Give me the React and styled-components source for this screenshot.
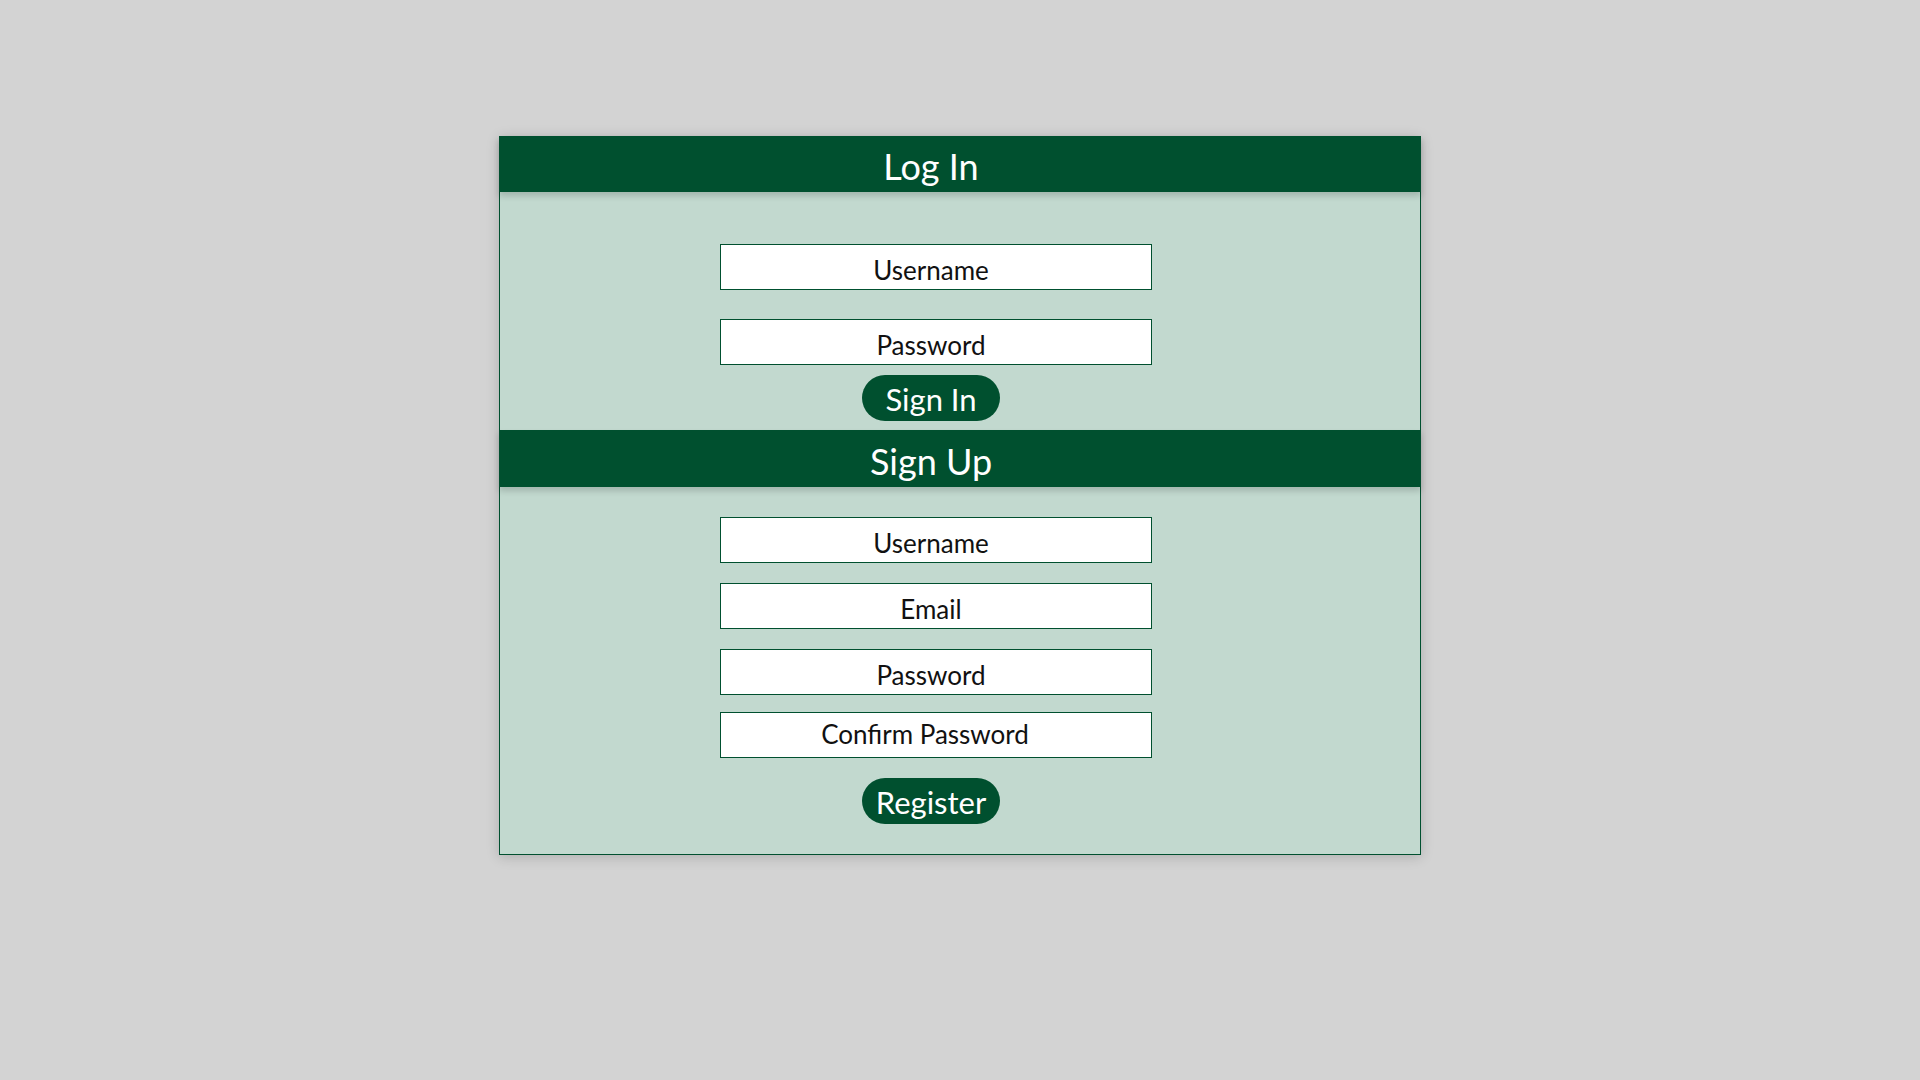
import React from "react";
import styled, { createGlobalStyle } from "styled-components";

const green = "#00502f";
const mint = "#c2d9cf";

const GlobalStyle = createGlobalStyle`
  html, body {
    margin: 0;
    padding: 0;
    background: #d3d3d3;
    font-family: Lato, "Open Sans", sans-serif;
  }
`;

const Page = styled.div`
  min-height: 1080px;
  padding-top: 136px;
  box-sizing: border-box;
`;

const Card = styled.div`
  width: 922px;
  margin: 0 auto;
  display: flex;
  flex-direction: column;
  box-shadow: 0 2px 12px rgba(0, 0, 0, 0.18);
`;

const Header = styled.div`
  height: ${(p) => p.$height}px;
  box-sizing: border-box;
  background: ${green};
  color: #fff;
  display: flex;
  align-items: center;
  justify-content: center;
  padding: 4px 58px 0 0;
  font-size: 36px;
  box-shadow: 0 4px 6px rgba(0, 0, 0, 0.16);
  position: relative;
  z-index: 1;
`;

const Body = styled.div`
  background: ${mint};
  border-left: 1px solid ${green};
  border-right: 1px solid ${green};
  border-bottom: ${(p) => (p.$last ? `1px solid ${green}` : "none")};
  display: flex;
  flex-direction: column;
  align-items: center;
  padding: ${(p) => p.$top}px 48px ${(p) => p.$bottom}px 0;
`;

const Field = styled.input`
  width: 432px;
  height: 46px;
  box-sizing: border-box;
  margin-top: ${(p) => p.$gap || 0}px;
  border: 1px solid ${green};
  background: #fff;
  font-family: inherit;
  font-size: 26px;
  text-align: center;
  padding: ${(p) => (p.$high ? "0 22px 3px 0" : "5px 10px 0 0")};
  outline: none;
  &::placeholder {
    color: #111;
    opacity: 1;
  }
`;

const Button = styled.button`
  width: 138px;
  height: 46px;
  margin-top: ${(p) => p.$gap}px;
  margin-right: 10px;
  border: none;
  border-radius: 23px;
  background: ${green};
  color: #fff;
  font-family: inherit;
  font-size: 31px;
  padding: 2px 0 0;
  cursor: pointer;
`;

export default function App() {
  return (
    <Page>
      <GlobalStyle />
      <Card>
        <Header $height={56}>Log In</Header>
        <Body $top={52} $bottom={9}>
          <Field placeholder="Username" />
          <Field placeholder="Password" type="password" $gap={29} />
          <Button $gap={10}>Sign In</Button>
        </Body>
        <Header $height={57}>Sign Up</Header>
        <Body $top={30} $bottom={30} $last>
          <Field placeholder="Username" />
          <Field placeholder="Email" $gap={20} />
          <Field placeholder="Password" type="password" $gap={20} />
          <Field placeholder="Confirm Password" type="password" $gap={17} $high />
          <Button $gap={20}>Register</Button>
        </Body>
      </Card>
    </Page>
  );
}
